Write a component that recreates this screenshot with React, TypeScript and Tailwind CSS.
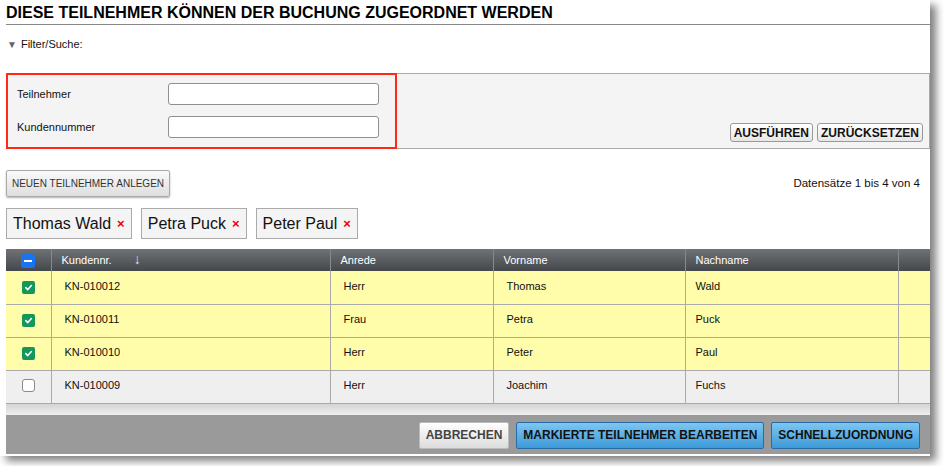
import React from "react";

const ROWS = [
  { nr: "KN-010012", anrede: "Herr", vorname: "Thomas", nachname: "Wald", checked: true },
  { nr: "KN-010011", anrede: "Frau", vorname: "Petra", nachname: "Puck", checked: true },
  { nr: "KN-010010", anrede: "Herr", vorname: "Peter", nachname: "Paul", checked: true },
  { nr: "KN-010009", anrede: "Herr", vorname: "Joachim", nachname: "Fuchs", checked: false },
];

const CHIPS = ["Thomas Wald", "Petra Puck", "Peter Paul"];

function CheckBox({ checked }: { checked: boolean }) {
  if (!checked) {
    return <span className="inline-block w-[13px] h-[13px] rounded-[3px] border border-[#8a8a8a] bg-white" />;
  }
  return (
    <span className="inline-flex items-center justify-center w-[13px] h-[13px] rounded-[2px] bg-[#15965a]">
      <svg width="9" height="9" viewBox="0 0 10 10">
        <path d="M2 5.2 L4.2 7.3 L8.2 2.8" fill="none" stroke="white" strokeWidth="1.8" strokeLinecap="round" strokeLinejoin="round" />
      </svg>
    </span>
  );
}

export default function App() {
  return (
    <div className="w-[944px] h-[466px] bg-white" style={{ fontFamily: '"Liberation Sans", Arial, sans-serif' }}>
      <div className="w-[930px] h-[456px] bg-white shadow-[6px_5px_8px_rgba(0,0,0,0.5)] pl-[6px] pr-0 pt-[5px] text-[#111]">
        {/* Title */}
        <h1 className="text-[16px] font-bold leading-[16px] pb-[3px] border-b border-[#888] text-black">
          DIESE TEILNEHMER KÖNNEN DER BUCHUNG ZUGEORDNET WERDEN
        </h1>

        {/* Filter toggle */}
        <div className="flex items-center gap-[4px] mt-[13px] ml-[1px] text-[11px] leading-[13px]">
          <span className="text-[#666] text-[10px]">▼</span>
          <span>Filter/Suche:</span>
        </div>

        {/* Filter panel */}
        <div className="mt-[22px] flex h-[76px] bg-[#f4f4f4] border border-[#aaa]">
          <div className="w-[391px] -ml-px -my-px border-2 border-[#ff2a10] flex flex-col gap-[11px] pt-[8px] pl-[9px]">
            <div className="flex items-center">
              <span className="w-[151px] text-[11px]">Teilnehmer</span>
              <div className="w-[211px] h-[22px] bg-white border border-[#8f8f8f] rounded-[3px]" />
            </div>
            <div className="flex items-center">
              <span className="w-[151px] text-[11px]">Kundennummer</span>
              <div className="w-[211px] h-[22px] bg-white border border-[#8f8f8f] rounded-[3px]" />
            </div>
          </div>
          <div className="flex-1 flex items-end justify-end gap-[4px] pr-[6px] pb-[6px]">
            <button className="h-[19px] px-[3px] text-[12px] font-bold leading-none border border-[#999] rounded-[3px] bg-gradient-to-b from-white to-[#e6e6e6]">
              AUSFÜHREN
            </button>
            <button className="h-[19px] px-[3px] text-[12px] font-bold leading-none border border-[#999] rounded-[3px] bg-gradient-to-b from-white to-[#e6e6e6]">
              ZURÜCKSETZEN
            </button>
          </div>
        </div>

        {/* Actions row */}
        <div className="flex items-center justify-between mt-[21px] pr-[10px]">
          <button className="h-[27px] w-[164px] text-[10px] text-[#333] border border-[#aaa] rounded-[2px] bg-gradient-to-b from-[#fafafa] to-[#dedede] shadow-[0_1px_2px_rgba(0,0,0,0.3)]">
            NEUEN TEILNEHMER ANLEGEN
          </button>
          <span className="text-[11.5px]">Datensätze 1 bis 4 von 4</span>
        </div>

        {/* Chips */}
        <div className="flex gap-[9px] mt-[11px]">
          {CHIPS.map((c) => (
            <div key={c} className="h-[31px] flex items-center gap-[6px] px-[6px] bg-[#f4f4f4] border border-[#aaa] text-[16px] text-[#111]">
              <span>{c}</span>
              <span className="text-[#e8000b] font-bold text-[13px]">×</span>
            </div>
          ))}
        </div>

        {/* Table */}
        <div className="mt-[10px] w-[924px]">
          <table className="w-full border-collapse table-fixed text-[11px]">
            <colgroup>
              <col className="w-[45px]" />
              <col className="w-[279px]" />
              <col className="w-[163px]" />
              <col className="w-[192px]" />
              <col className="w-[213px]" />
              <col />
            </colgroup>
            <thead>
              <tr className="h-[22px] bg-gradient-to-b from-[#6f7276] to-[#45484b] text-white text-left">
                <th className="border-r border-[#888] text-center font-normal">
                  <span className="inline-flex items-center justify-center w-[14px] h-[14px] rounded-[3px] bg-[#1a73f0] align-middle">
                    <span className="w-[8px] h-[2px] bg-white" />
                  </span>
                </th>
                <th className="border-r border-[#888] font-normal pl-[10px]">
                  Kundennr.<span className="ml-[22px] text-[14px] leading-none text-[#ddd]">↓</span>
                </th>
                <th className="border-r border-[#888] font-normal pl-[10px]">Anrede</th>
                <th className="border-r border-[#888] font-normal pl-[10px]">Vorname</th>
                <th className="border-r border-[#888] font-normal pl-[10px]">Nachname</th>
                <th className="font-normal" />
              </tr>
            </thead>
            <tbody>
              {ROWS.map((r) => (
                <tr key={r.nr} className={`h-[33px] border-b border-[#aaa] ${r.checked ? "bg-[#fffcaa]" : "bg-[#efefef]"}`}>
                  <td className="border-r border-[#aaa] text-center align-middle">
                    <span className="inline-flex pt-[2px]"><CheckBox checked={r.checked} /></span>
                  </td>
                  <td className="border-r border-[#aaa] pl-[13px] pb-[3px]">{r.nr}</td>
                  <td className="border-r border-[#aaa] pl-[13px] pb-[3px]">{r.anrede}</td>
                  <td className="border-r border-[#aaa] pl-[13px] pb-[3px]">{r.vorname}</td>
                  <td className="border-r border-[#aaa] pl-[10px] pb-[3px]">{r.nachname}</td>
                  <td />
                </tr>
              ))}
            </tbody>
          </table>
          <div className="h-[11px] bg-gradient-to-b from-[#d4d4d4] to-[#efefef]" />
          <div className="h-[39px] bg-[#9a9a9a] flex items-center justify-end gap-[7px] pr-[10px] pt-[2px]">
            <button className="h-[27px] px-[6px] text-[12px] font-bold text-[#444] border border-[#bbb] rounded-[2px] bg-gradient-to-b from-white to-[#dcdcdc]">
              ABBRECHEN
            </button>
            <button className="h-[27px] px-[6px] text-[12px] font-bold text-[#111] border border-[#2a6aa5] rounded-[2px] bg-gradient-to-b from-[#7cc6f2] to-[#3c9ad8]">
              MARKIERTE TEILNEHMER BEARBEITEN
            </button>
            <button className="h-[27px] px-[6px] text-[12px] font-bold text-[#111] border border-[#2a6aa5] rounded-[2px] bg-gradient-to-b from-[#7cc6f2] to-[#3c9ad8]">
              SCHNELLZUORDNUNG
            </button>
          </div>
        </div>
      </div>
    </div>
  );
}
